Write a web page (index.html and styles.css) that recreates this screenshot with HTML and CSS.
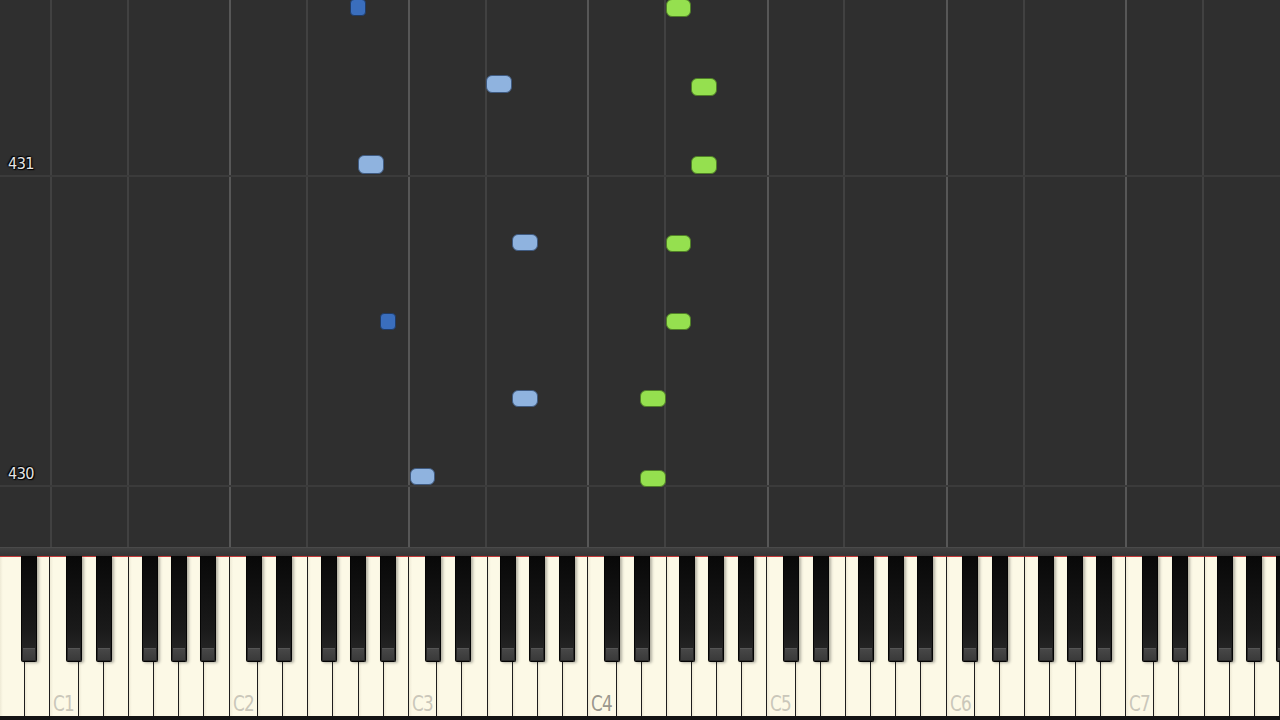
FILE: index.html
```html
<!DOCTYPE html>
<html>
<head>
	<meta charset="utf-8">
	<title>Piano Roll</title>
	<link rel="stylesheet" href="styles.css">
</head>
<body>
	<main class="player">
		<div class="roll" id="roll">
			<div class="bar" style="top: 175px"><span class="bar-num">431</span></div>
			<div class="bar" style="top: 485px"><span class="bar-num">430</span></div>
		</div>
		<div class="divider"></div>
		<div class="keyboard" id="keyboard"></div>
		<div class="keybed"></div>
	</main>
<script>
	const roll = document.getElementById('roll');
	const keyboard = document.getElementById('keyboard');
	const names = ['A', 'B', 'C', 'D', 'E', 'F', 'G'];
	const W = 25.6;
	// black key offset from the white key boundary, by the white key on its left
	const sharp = {C: -2.5, D: 2, F: -4, G: -0.5, A: 3.5};

	for(let i = 0; i < 50; i++){
		const name = names[i % 7];
		const octave = Math.floor((i + 5) / 7);
		const key = document.createElement('div');
		key.className = 'white';
		if(name == 'C'){
			const label = document.createElement('span');
			label.className = octave == 4 ? 'label mid' : 'label';
			label.innerHTML = 'C' + octave;
			key.appendChild(label);
		}
		keyboard.appendChild(key);

		if(sharp[name] !== undefined){
			const black = document.createElement('div');
			black.className = 'black';
			black.style.left = ((i + 1) * W + sharp[name] - 8) + 'px';
			keyboard.appendChild(black);
		}

		if(name == 'C' || name == 'F'){
			const line = document.createElement('div');
			line.className = (name == 'C' && i > 2) ? 'vline strong' : 'vline';
			line.style.left = (i * W - 1.5) + 'px';
			roll.insertBefore(line, roll.firstChild);
		}
	}

	// [white key index or black key left, top, height, kind]
	const notes = [
		[350, -1, 17, 'dark'],
		[26, -1, 18, 'green'],
		[19, 75, 18, 'light'],
		[27, 78, 18, 'green'],
		[14, 155, 19, 'light'],
		[27, 156, 18, 'green'],
		[20, 234, 17, 'light'],
		[26, 235, 17, 'green'],
		[379.5, 313, 17, 'dark'],
		[26, 313, 17, 'green'],
		[20, 390, 17, 'light'],
		[25, 390, 17, 'green'],
		[16, 468, 17, 'light'],
		[25, 470, 17, 'green']
	];
	for(let n = 0; n < notes.length; n++){
		const note = document.createElement('div');
		const d = notes[n];
		note.className = 'note ' + d[3];
		if(d[3] == 'dark'){
			note.style.left = d[0] + 'px';
			note.style.width = '16px';
		}else{
			note.style.left = (d[0] * W) + 'px';
			note.style.width = W + 'px';
		}
		note.style.top = d[1] + 'px';
		note.style.height = d[2] + 'px';
		roll.appendChild(note);
	}
</script>
</body>
</html>
```

FILE: styles.css
```css
body{margin: 0;background-color: #2f2f2f;overflow: hidden;font-family: "DejaVu Sans Condensed", "DejaVu Sans", sans-serif;}
.player{width: 1280px;height: 720px;display: flex;flex-direction: column;}

.roll{position: relative;height: 547px;overflow: hidden;background-color: #2f2f2f;}
.vline{position: absolute;top: 0;bottom: 0;width: 2px;background-color: #414141;}
.vline.strong{background-color: #575757;}
.bar{position: absolute;left: 0;right: 0;height: 2px;background-color: #3b3b3b;}
.bar-num{position: absolute;left: 8px;bottom: 4px;font-size: 16px;font-stretch: condensed;letter-spacing: -0.5px;color: #e4e4e4;text-shadow: 0 0 2px #000, 0 0 2px #000, 1px 1px 1px #000, -1px -1px 1px #000;}

.note{position: absolute;box-sizing: border-box;border-radius: 6px;border: 1px solid;}
.note.green{background-color: #95e04f;border-color: #4f7f27;}
.note.light{background-color: #8fb3df;border-color: #3f5a80;}
.note.dark{background-color: #3a6ebd;border-color: #1f3b66;border-radius: 4px;}

.divider{height: 9px;box-sizing: border-box;border-top: 1px solid #4a4a4a;background: linear-gradient(#404040, #353535);}

.keyboard{position: relative;height: 160px;display: flex;background-color: #1a1a1a;}
.white{flex: 1;box-sizing: border-box;border-top: 1px solid #c43a3a;border-right: 1px solid #1e1e1e;background: linear-gradient(to right, #eeead6, #fcf9e6 12%, #fcf9e6);display: flex;align-items: flex-end;padding: 0 0 3px 3px;}
.label{font-size: 22px;line-height: 18px;font-stretch: condensed;letter-spacing: -1px;color: #cac7ba;transform: scaleX(0.85);transform-origin: left bottom;}
.label.mid{color: #9a978d;}
.black{position: absolute;top: 0;width: 16px;height: 106px;box-sizing: border-box;border: 1px solid #050505;border-top: none;border-radius: 0 0 2px 2px;background: linear-gradient(#080808, #1a1a1a 70%, #2a2a2a);box-shadow: 2px 1px 3px rgba(0, 0, 0, 0.3);}
.black::after{content: "";position: absolute;left: 1px;right: 1px;bottom: 1px;height: 11px;border-top: 1px solid #555;background: linear-gradient(#474747, #3a3a3a);}

.keybed{height: 4px;background-color: #141414;}
```
